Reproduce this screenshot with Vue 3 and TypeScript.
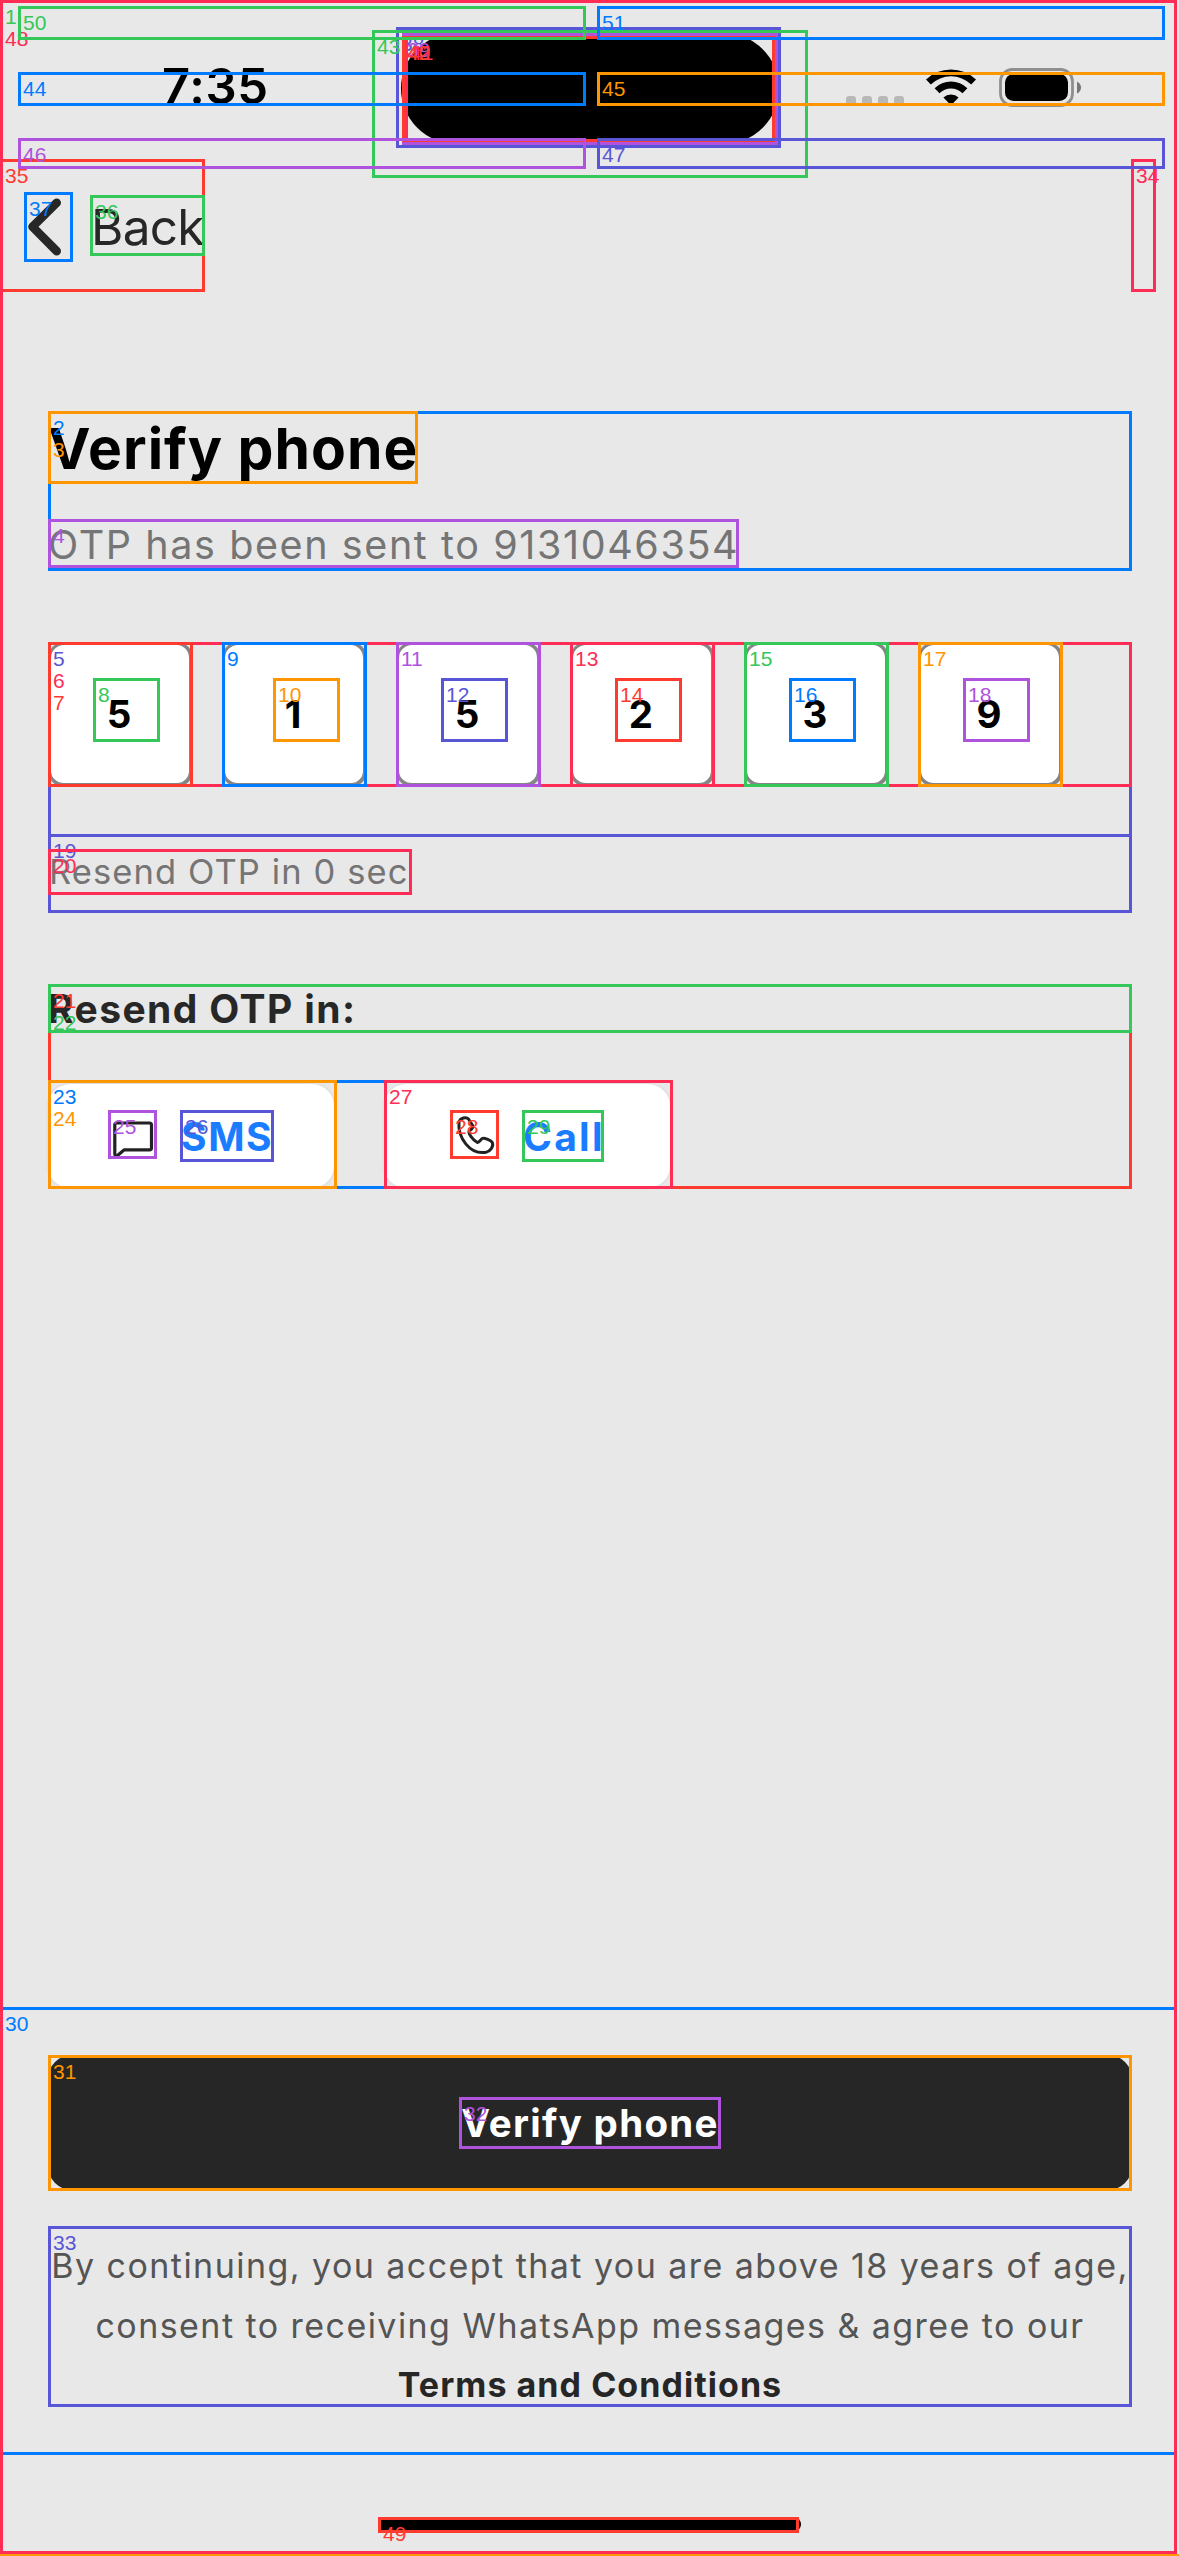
<script setup lang="ts">
interface Region {
  id: number
  x: number
  y: number
  r: number
  b: number
  color: string
  row?: number
}

const red = '#ff3b30'
const orange = '#ff9500'
const purple = '#af52de'
const indigo = '#5856d6'
const pink = '#ff2d55'
const green = '#34c759'
const blue = '#007aff'

const regions: Region[] = [
  { id: 1, x: 0, y: 0, r: 1177, b: 2554, color: green },
  { id: 2, x: 48, y: 411, r: 1132, b: 571, color: blue },
  { id: 3, x: 48, y: 411, r: 418, b: 484, color: orange, row: 1 },
  { id: 4, x: 48, y: 519, r: 739, b: 568, color: purple },
  { id: 5, x: 48, y: 642, r: 1132, b: 913, color: indigo },
  { id: 6, x: 48, y: 642, r: 1132, b: 787, color: pink, row: 1 },
  { id: 7, x: 48, y: 642, r: 193, b: 787, color: red, row: 2 },
  { id: 8, x: 93, y: 678, r: 160, b: 742, color: green },
  { id: 9, x: 222, y: 642, r: 367, b: 787, color: blue },
  { id: 10, x: 273, y: 678, r: 340, b: 742, color: orange },
  { id: 11, x: 396, y: 642, r: 541, b: 787, color: purple },
  { id: 12, x: 441, y: 678, r: 508, b: 742, color: indigo },
  { id: 13, x: 570, y: 642, r: 715, b: 787, color: pink },
  { id: 14, x: 615, y: 678, r: 682, b: 742, color: red },
  { id: 15, x: 744, y: 642, r: 889, b: 787, color: green },
  { id: 16, x: 789, y: 678, r: 856, b: 742, color: blue },
  { id: 17, x: 918, y: 642, r: 1063, b: 787, color: orange },
  { id: 18, x: 963, y: 678, r: 1030, b: 742, color: purple },
  { id: 19, x: 48, y: 834, r: 1132, b: 913, color: indigo },
  { id: 20, x: 48, y: 849, r: 412, b: 895, color: pink },
  { id: 21, x: 48, y: 984, r: 1132, b: 1189, color: red },
  { id: 22, x: 48, y: 984, r: 1132, b: 1033, color: green, row: 1 },
  { id: 23, x: 48, y: 1080, r: 673, b: 1189, color: blue },
  { id: 24, x: 48, y: 1080, r: 337, b: 1189, color: orange, row: 1 },
  { id: 25, x: 108, y: 1110, r: 157, b: 1159, color: purple },
  { id: 26, x: 180, y: 1110, r: 274, b: 1162, color: indigo },
  { id: 27, x: 384, y: 1080, r: 673, b: 1189, color: pink },
  { id: 28, x: 450, y: 1110, r: 499, b: 1159, color: red },
  { id: 29, x: 522, y: 1110, r: 604, b: 1162, color: green },
  { id: 30, x: 0, y: 2007, r: 1177, b: 2455, color: blue },
  { id: 31, x: 48, y: 2055, r: 1132, b: 2191, color: orange },
  { id: 32, x: 459, y: 2097, r: 721, b: 2149, color: purple },
  { id: 33, x: 48, y: 2226, r: 1132, b: 2407, color: indigo },
  { id: 34, x: 1131, y: 159, r: 1156, b: 292, color: pink },
  { id: 35, x: 0, y: 159, r: 205, b: 292, color: red },
  { id: 36, x: 90, y: 195, r: 205, b: 256, color: green },
  { id: 37, x: 24, y: 192, r: 73, b: 262, color: blue },
  { id: 38, x: 396, y: 27, r: 781, b: 148, color: indigo },
  { id: 39, x: 402, y: 33, r: 778, b: 145, color: purple },
  { id: 40, x: 402, y: 36, r: 775, b: 142, color: red },
  { id: 41, x: 405, y: 36, r: 775, b: 142, color: pink },
  { id: 42, x: 402, y: 36, r: 775, b: 142, color: red },
  { id: 43, x: 372, y: 30, r: 808, b: 178, color: green },
  { id: 44, x: 18, y: 72, r: 586, b: 106, color: blue },
  { id: 45, x: 597, y: 72, r: 1165, b: 106, color: orange },
  { id: 46, x: 18, y: 138, r: 586, b: 169, color: purple },
  { id: 47, x: 597, y: 138, r: 1165, b: 169, color: indigo },
  { id: 48, x: 0, y: 0, r: 1177, b: 2554, color: pink, row: 1 },
  { id: 49, x: 378, y: 2517, r: 799, b: 2533, color: red },
  { id: 50, x: 18, y: 6, r: 586, b: 40, color: green },
  { id: 51, x: 597, y: 6, r: 1165, b: 40, color: blue },
]

const digits = ['5', '1', '5', '2', '3', '9']

const frame = (g: Region) => ({
  left: `${g.x}px`,
  top: `${g.y}px`,
  width: `${g.r - g.x}px`,
  height: `${g.b - g.y}px`,
  borderColor: g.color,
  color: g.color,
})
const tag = (g: Region) => ({ top: `${2 + (g.row ?? 0) * 22}px` })
</script>

<template>
  <main class="screen">
    <header class="status">
      <span class="clock">7:35</span>
      <span class="island"></span>
      <span class="indicators">
        <span class="dots"><i v-for="n in 4" :key="n"></i></span>
        <svg class="wifi" width="50" height="35" viewBox="0 0 50 35">
          <path d="M0 10.5a36 36 0 0 1 50 0l-4.8 5a29 29 0 0 0-40.4 0z" />
          <path d="M8.6 19.2a23.500 23.500 0 0 1 32.800 0l-4.900 5a16.500 16.500 0 0 0-23 0z" />
          <path d="M17.400 28.500a11 11 0 0 1 15.200 0l-5.600 5.700q-2 1.400-4 0z" />
        </svg>
        <svg class="battery" width="83" height="40" viewBox="0 0 83 40">
          <rect x="1.500" y="1.500" width="72" height="36" rx="12" fill="none" stroke="#8f8f8f" stroke-width="2.800" />
          <rect x="6" y="6" width="63" height="27" rx="8.500" />
          <path d="M78 13.500q4 2 4 6t-4 6z" fill="#777" />
        </svg>
      </span>
    </header>

    <nav class="nav">
      <svg class="chevron" width="49" height="70" viewBox="0 0 49 70">
        <path d="M32.700 10.700 8.500 34.800l24.200 24.300" fill="none" stroke="#272727" stroke-width="8.600" stroke-linecap="round" stroke-linejoin="round" />
      </svg>
      <span class="back">Back</span>
    </nav>

    <section class="content">
      <h1 class="title">Verify phone</h1>
      <p class="sent">OTP has been sent to 9131046354</p>
      <div class="otp">
        <div v-for="(d, i) in digits" :key="i" class="cell">{{ d }}</div>
      </div>
      <p class="timer">Resend OTP in 0 sec</p>
      <h2 class="resend">Resend OTP in:</h2>
      <div class="choices">
        <div class="choice">
          <svg width="49" height="49" viewBox="0 0 49 49">
            <path d="M8.500 13h33q2 0 2 2v23q0 1.800-2 1.800H16.300L9.500 45.500q-2.700 1-2.700-1.500V15q0-2 1.700-2z" fill="none" stroke="#222" stroke-width="3.200" stroke-linejoin="round" />
          </svg>
          <span class="way sms">SMS</span>
        </div>
        <div class="choice">
          <svg width="49" height="49" viewBox="0 0 49 49">
            <path d="M9 11.500C10.500 8 16 6.500 18.500 9l4 6.200c1.200 2-.2 3.200-3.200 5.800-1.700 1.700 3.700 9.300 8 11.300 1.600.8 3.200-2.800 5-3.800 2-1 9 2.300 10 4 1.700 4-2.300 9-6.300 9.800C20 45 7.500 28 9 11.500z" fill="none" stroke="#222" stroke-width="3" stroke-linejoin="round" />
          </svg>
          <span class="way call">Call</span>
        </div>
      </div>
    </section>

    <footer class="footer">
      <div class="verify"><span>Verify phone</span></div>
      <p class="legal">
        <span>By continuing, you accept that you are above 18 years of age,</span>
        <span>consent to receiving WhatsApp messages &amp; agree to our</span>
        <b>Terms and Conditions</b>
      </p>
    </footer>
    <div class="home"></div>

    <div class="overlay">
      <div v-for="g in regions" :key="g.id" class="region" :style="frame(g)">
        <span class="tag" :style="tag(g)">{{ g.id }}</span>
      </div>
      <div class="edge"></div>
    </div>
  </main>
</template>

<style scoped>
.screen {
  position: relative;
  display: flex;
  flex-direction: column;
  width: 1179px;
  height: 2556px;
  overflow: hidden;
  background: #e8e8e8;
  font-family: Inter, 'Liberation Sans', sans-serif;
  color: #272727;
}
h1, h2, p { margin: 0; }
span, p, h1, h2, b { white-space: nowrap; }
svg { display: block; flex: none; }

.status {
  display: flex;
  align-items: flex-start;
  height: 159px;
  flex: none;
}
.clock {
  width: 240px;
  padding: 58px 0 0 162px;
  box-sizing: border-box;
  font-size: 49px;
  font-weight: 600;
  line-height: 58px;
  letter-spacing: 0.6px;
  color: #000;
}
.island {
  width: 378px;
  height: 111px;
  margin: 33px 0 0 161px;
  border-radius: 56px;
  background: #000;
}
.indicators {
  display: flex;
  margin: 68px 0 0 67px;
}
.dots { display: flex; gap: 6px; padding-top: 28px; margin-right: 22px; }
.dots i { width: 10px; height: 10px; border-radius: 3px; background: #b8b8b8; }
.wifi { margin: 1px 23px 0 0; }

.nav {
  display: flex;
  align-items: flex-start;
  height: 133px;
  padding: 33px 0 0 24px;
  box-sizing: border-box;
  flex: none;
}
.back {
  margin: 3px 0 0 18px;
  font-size: 49.5px;
  line-height: 64px;
  letter-spacing: -0.7px;
}

.content { padding: 119px 47px 0 48px; }
.title {
  color: #000;
  font-size: 57px;
  font-weight: 700;
  line-height: 76px;
  letter-spacing: 1px;
}
.sent {
  margin-top: 32px;
  color: #757575;
  font-size: 39.5px;
  line-height: 52px;
  letter-spacing: 1.6px;
}
.otp { display: flex; gap: 29px; margin-top: 71px; }
.cell {
  width: 145px;
  height: 145px;
  box-sizing: border-box;
  padding-right: 2px;
  border: solid #858585;
  border-width: 3px 4px 4px 3px;
  border-radius: 16px;
  background: #fff;
  color: #000;
  font-size: 38.5px;
  font-weight: 700;
  line-height: 139px;
  text-align: center;
}
.timer {
  height: 79px;
  margin-top: 47px;
  padding-left: 1px;
  color: #757575;
  font-size: 34.5px;
  line-height: 76px;
  letter-spacing: 1.1px;
}
.resend {
  margin-top: 71px;
  font-size: 39px;
  font-weight: 700;
  line-height: 50px;
  height: 49px;
  letter-spacing: 1.4px;
}
.choices { display: flex; gap: 50px; margin-top: 47px; }
.choice {
  display: flex;
  justify-content: center;
  align-items: flex-start;
  gap: 23px;
  width: 286px;
  height: 104px;
  margin-top: 4px;
  padding-top: 26px;
  box-sizing: border-box;
  border-radius: 22px;
  background: #fff;
  box-shadow: 0 0 3px #d0d0d0;
}
.way { color: #1a7cff; font-size: 39px; font-weight: 700; line-height: 54px; }
.sms { width: 94px; letter-spacing: 1.6px; text-indent: 1px; }
.call { width: 82px; letter-spacing: 2.3px; text-indent: 1px; }

.footer { padding: 0 47px 0 48px; margin-top: auto; }
.verify {
  display: flex;
  justify-content: center;
  height: 135px;
  border-radius: 24px;
  background: #262626;
  color: #fff;
  font-size: 38.5px;
  font-weight: 700;
  line-height: 136px;
  letter-spacing: 1.3px;
}
.legal {
  display: flex;
  flex-direction: column;
  align-items: center;
  margin-top: 46px;
  font-size: 34px;
  line-height: 59.6px;
  letter-spacing: 1.45px;
  color: #555;
}
.legal b { font-weight: 700; color: #262626; letter-spacing: 1.05px; }
.home {
  flex: none;
  width: 422px;
  height: 15px;
  margin: 102px 0 24px 379px;
  border-radius: 8px;
  background: #000;
}

.overlay { position: absolute; inset: 0; }
.region { position: absolute; box-sizing: border-box; border: 3px solid; }
.tag {
  position: absolute;
  left: 2px;
  font-family: 'Liberation Sans', sans-serif;
  font-size: 21px;
  line-height: 24px;
}
.edge { position: absolute; left: 0; right: 0; bottom: 0; height: 2px; background: #ff9500; }
</style>
